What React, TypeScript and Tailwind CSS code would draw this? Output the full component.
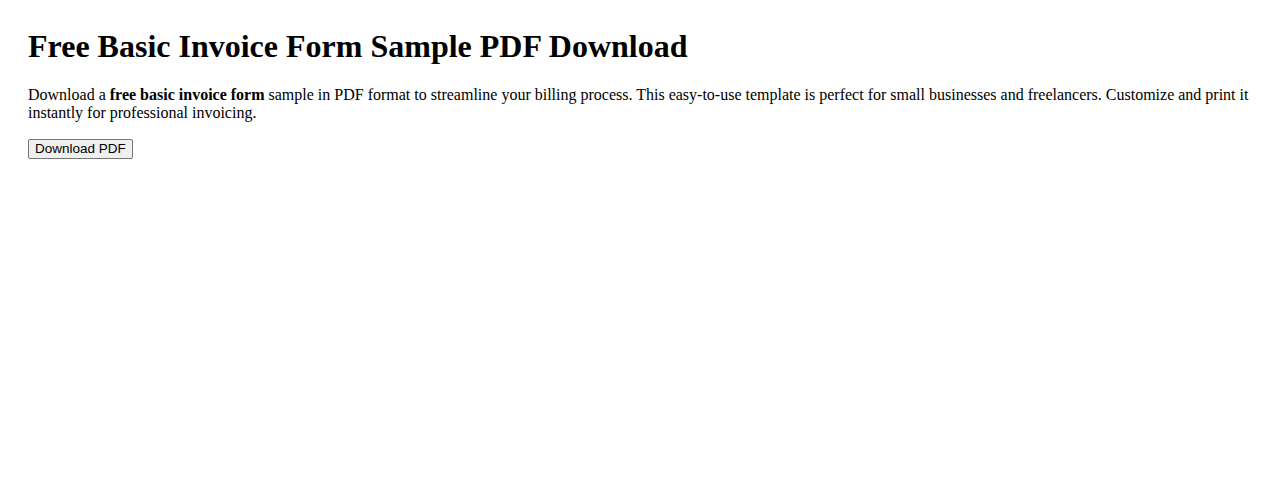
export default function App() {
  return (
    <div className="min-h-screen bg-white px-7 pt-7 text-black font-['Liberation_Serif','Times_New_Roman',serif]">
      <h1 className="text-[32px] font-bold leading-[37px] mb-[21px]">
        Free Basic Invoice Form Sample PDF Download
      </h1>
      <p className="text-[16px] leading-[18px] mb-[14px]">
        Download a <strong className="font-bold">free basic invoice form</strong> sample in PDF format to
        streamline your billing process. This easy-to-use template is perfect for small businesses and
        freelancers. Customize and print it instantly for professional invoicing.
      </p>
      <button
        type="button"
        className="h-[20px] px-[6px] bg-[#efefef] border border-[#767676] rounded-[2px] text-[13.5px] leading-none text-black font-['Liberation_Sans',Arial,sans-serif]"
      >
        Download PDF
      </button>
    </div>
  );
}
